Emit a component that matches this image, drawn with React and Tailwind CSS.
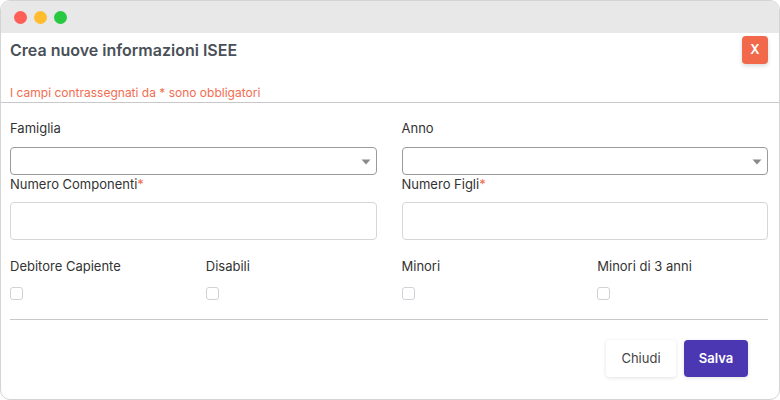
import React from "react";

function Label({ children, required }) {
  return (
    <div className="text-[13px] leading-[18px] text-[#333333]">
      {children}
      {required && <span className="text-[#f26a4b]">*</span>}
    </div>
  );
}

function Select() {
  return (
    <div className="relative h-[28px] rounded-[4px] border border-[#9a9a9a] bg-white">
      <svg className="absolute right-[5px] top-[11px]" width="10" height="6" viewBox="0 0 10 6">
        <path d="M0.5 0.5 L9.5 0.5 L5 5.5 Z" fill="#8a8a8a" />
      </svg>
    </div>
  );
}

function Input() {
  return <div className="h-[38px] rounded-[4px] border border-[#d6d6d6] bg-white" />;
}

function Check({ label }) {
  return (
    <div className="flex flex-col">
      <Label>{label}</Label>
      <div className="mt-[12px] h-[13px] w-[13px] rounded-[3px] border border-[#cfd3d8] bg-white" />
    </div>
  );
}

export default function App() {
  return (
    <div
      className="w-[780px] h-[400px] bg-white"
      style={{ fontFamily: "Inter, 'Noto Sans', sans-serif" }}
    >
      <div className="flex h-full w-full flex-col overflow-hidden rounded-[10px] border border-[#d4d4d4] bg-white">
        <div className="flex h-[32px] shrink-0 items-center gap-[7px] bg-[#e8e8e8] pl-[13px]">
          <span className="h-[13px] w-[13px] rounded-full bg-[#fe5f57]" />
          <span className="h-[13px] w-[13px] rounded-full bg-[#febc2e]" />
          <span className="h-[13px] w-[13px] rounded-full bg-[#28c840]" />
        </div>
        <div className="border-b border-[#c8c8c8] pl-[9px] pr-[11px] pt-[3px]">
          <div className="flex h-[28px] items-center justify-between">
            <div className="text-[16px] font-semibold text-[#495057]">Crea nuove informazioni ISEE</div>
            <div className="flex h-[28px] w-[26px] items-center justify-center rounded-[4px] bg-[#f2684a] text-[13px] font-semibold text-white shadow-[0_2px_4px_rgba(0,0,0,0.15)]">
              X
            </div>
          </div>
          <div className="mt-[20px] text-[12px] leading-[18px] text-[#f26c4f]">
            I campi contrassegnati da * sono obbligatori
          </div>
        </div>
        <div className="pl-[9px] pr-[11px] pt-[16px]">
          <div className="grid grid-cols-2 gap-x-[25px]">
            <div className="flex flex-col">
              <Label>Famiglia</Label>
              <div className="mt-[10px]">
                <Select />
              </div>
              <Label required>Numero Componenti</Label>
              <div className="mt-[9px]">
                <Input />
              </div>
            </div>
            <div className="flex flex-col">
              <Label>Anno</Label>
              <div className="mt-[10px]">
                <Select />
              </div>
              <Label required>Numero Figli</Label>
              <div className="mt-[9px]">
                <Input />
              </div>
            </div>
          </div>
          <div className="mt-[17px] grid grid-cols-4 gap-x-[25px]">
            <Check label="Debitore Capiente" />
            <Check label="Disabili" />
            <Check label="Minori" />
            <Check label="Minori di 3 anni" />
          </div>
          <div className="mt-[19px] border-t border-[#c8c8c8]" />
          <div className="mt-[20px] flex justify-end gap-[8px] pr-[20px]">
            <div className="flex h-[37px] w-[70px] items-center justify-center rounded-[4px] bg-white text-[13px] text-[#444444] shadow-[0_1px_4px_rgba(0,0,0,0.12)]">
              Chiudi
            </div>
            <div className="flex h-[37px] w-[64px] items-center justify-center rounded-[4px] bg-[#4b37b2] text-[13px] font-semibold text-white shadow-[0_1px_4px_rgba(0,0,0,0.12)]">
              Salva
            </div>
          </div>
        </div>
      </div>
    </div>
  );
}
